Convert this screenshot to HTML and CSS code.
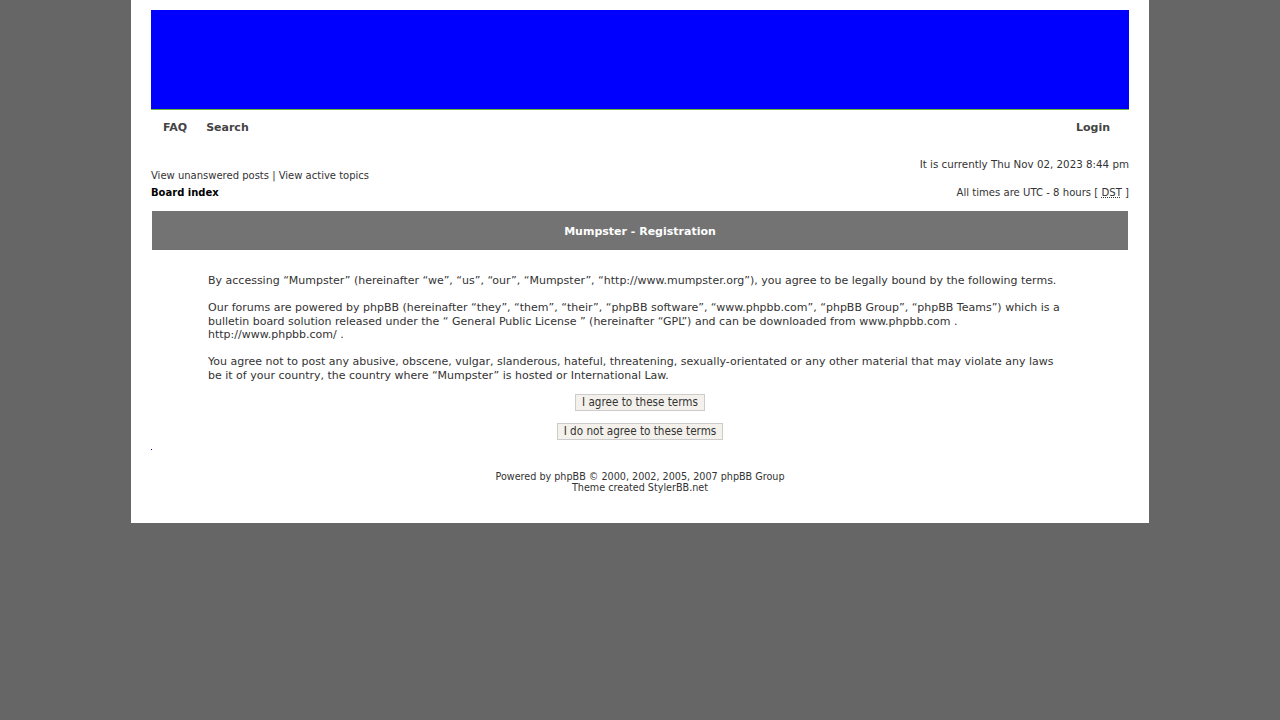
FILE: index.html
```html
<!DOCTYPE html>
<html>
<head>
<meta charset="utf-8">
<title>Mumpster - Registration</title>
<link rel="stylesheet" href="styles.css">
</head>
<body>
<div class="wrap">
  <div class="logo-bar"></div>
  <div class="menubar">
    <div class="menu-left"><a href="#">FAQ</a><a href="#">Search</a></div>
    <div class="menu-right"><a href="#">Login</a></div>
  </div>
  <div class="datebar">It is currently Thu Nov 02, 2023 8:44 pm</div>
  <div class="searchbar"><a href="#">View unanswered posts</a> | <a href="#">View active topics</a></div>
  <div class="navbar">
    <a class="board" href="#">Board index</a>
    <span class="times">All times are UTC - 8 hours [ <abbr title="Daylight Saving Time">DST</abbr> ]</span>
  </div>
  <div class="tablebg">
    <div class="cat-head">Mumpster - Registration</div>
    <div class="terms">
      <p>By accessing “Mumpster” (hereinafter “we”, “us”, “our”, “Mumpster”, “http://www.mumpster.org”), you agree to be legally bound by the following terms.</p>
      <p>Our forums are powered by phpBB (hereinafter “they”, “them”, “their”, “phpBB software”, “www.phpbb.com”, “phpBB Group”, “phpBB Teams”) which is a bulletin board solution released under the “ General Public License ” (hereinafter “GPL”) and can be downloaded from www.phpbb.com . http://www.phpbb.com/ .</p>
      <p>You agree not to post any abusive, obscene, vulgar, slanderous, hateful, threatening, sexually-orientated or any other material that may violate any laws be it of your country, the country where “Mumpster” is hosted or International Law.</p>
      <div class="actions">
        <button class="btn">I agree to these terms</button>
        <button class="btn">I do not agree to these terms</button>
      </div>
    </div>
  </div>
  <div class="spacer"></div>
  <div class="copyright">Powered by phpBB © 2000, 2002, 2005, 2007 phpBB Group<br>Theme created StylerBB.net</div>
</div>
</body>
</html>
```
FILE: styles.css
```css
html, body {
  margin: 0;
  padding: 0;
  background: #666666;
}
body {
  font-family: Verdana, "DejaVu Sans", sans-serif;
  font-size: 11px;
  color: #333333;
}
a {
  color: #333333;
  text-decoration: none;
}
.wrap {
  width: 978px;
  margin-left: 131px;
  background: #ffffff;
  padding: 10px 20px 30px 20px;
}
.logo-bar {
  height: 99px;
  background: #0000ff;
  border-bottom: 1px solid #66bb33;
}
.menubar {
  display: flex;
  justify-content: space-between;
  padding: 11px 19px 0 12px;
  height: 21px;
  font-weight: bold;
  font-size: 11px;
  line-height: 14px;
}
.menubar a {
  color: #444444;
  margin-right: 19px;
}
.menu-right a {
  margin-right: 0;
}
.datebar {
  text-align: right;
  margin-top: 15px;
  line-height: 14px;
  font-size: 10.3px;
}
.searchbar {
  line-height: 14px;
  margin-top: -2px;
  font-size: 10px;
}
.navbar {
  display: flex;
  justify-content: space-between;
  margin-top: 3px;
  line-height: 14px;
  font-size: 10px;
}
.navbar .board {
  font-weight: bold;
  color: #000000;
}
.times {
  font-size: 10.1px;
}
abbr {
  text-decoration: underline dotted;
}
.tablebg {
  margin-top: 10px;
  padding: 1px;
}
.cat-head {
  background: #737373;
  color: #ffffff;
  font-weight: bold;
  text-align: center;
  height: 37px;
  padding-top: 2px;
  line-height: 37px;
  font-size: 11px;
}
.terms {
  padding: 24px 68px 0 56px;
  line-height: 13.5px;
  font-size: 11px;
}
.terms p {
  margin: 0 0 13.5px 0;
}
.actions {
  display: flex;
  flex-direction: column;
  align-items: center;
  gap: 12px;
  margin: -2px -12px 0 0;
}
.btn {
  font-family: "DejaVu Sans Condensed", "DejaVu Sans", sans-serif;
  font-size: 11.6px;
  color: #333333;
  background: #f4f1ec;
  border: 1px solid #cccccc;
  height: 17px;
  padding: 0 6px;
  line-height: 15px;
}
.spacer {
  width: 1px;
  height: 1px;
  background: #0000ff;
  margin-top: 8px;
}
.copyright {
  font-family: "DejaVu Sans Condensed", "DejaVu Sans", sans-serif;
  font-size: 10.7px;
  text-align: center;
  line-height: 11px;
  margin-top: 21px;
  color: #333333;
}
```
